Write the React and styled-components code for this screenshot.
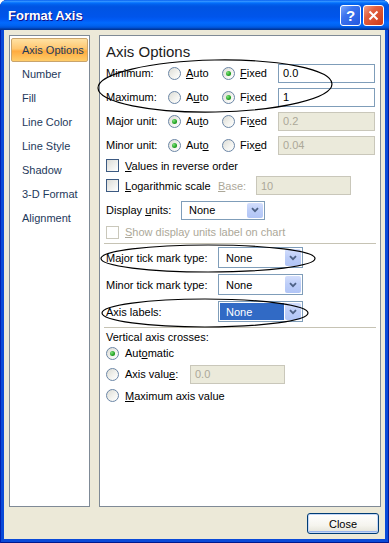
import React from "react";
import styled, { createGlobalStyle } from "styled-components";

const GlobalStyle = createGlobalStyle`
  html, body {
    margin: 0;
    padding: 0;
    background: #ffffff;
  }
  body {
    font-family: "Liberation Sans", Arial, sans-serif;
    font-size: 11px;
    color: #000;
  }
`;

const Window = styled.div`
  position: relative;
  width: 389px;
  height: 543px;
  display: flex;
  flex-direction: column;
  background: #0a4ad8;
  border-radius: 7px 7px 0 0;
  overflow: hidden;
  box-shadow: inset 1px 0 #0020b0, inset -1px 0 #001c9c, inset 0 -1px #00188c;
`;

const TitleBar = styled.div`
  height: 30px;
  flex-shrink: 0;
  display: flex;
  align-items: center;
  padding: 0 5px 0 8px;
  box-sizing: border-box;
  background: linear-gradient(
    to bottom,
    #0058ee 0%,
    #3593ff 4%,
    #288eff 6%,
    #127dff 8%,
    #036ffc 10%,
    #0262ee 14%,
    #0057e5 20%,
    #0054e3 24%,
    #0055eb 56%,
    #005bf5 66%,
    #026afe 76%,
    #0062ef 86%,
    #0052d6 92%,
    #0040ab 96%,
    #003092 100%
  );
`;

const Title = styled.div`
  flex: 1;
  color: #ffffff;
  font-weight: bold;
  font-size: 13px;
  text-shadow: 1px 1px #0f1089;
`;

const CaptionButton = styled.div`
  width: 21px;
  height: 21px;
  box-sizing: border-box;
  margin-left: 2px;
  border: 1px solid #ffffff;
  border-radius: 3px;
  display: flex;
  align-items: center;
  justify-content: center;
  color: #ffffff;
  font-weight: bold;
  font-size: 15px;
  background: ${(p) =>
    p.$variant === "close"
      ? "linear-gradient(135deg, #f0a08a 0%, #e2603f 35%, #cc3a18 100%)"
      : "linear-gradient(135deg, #7fa8fa 0%, #3d74ee 35%, #2256e0 100%)"};
`;

const Body = styled.div`
  flex: 1;
  margin: 0 4px 4px;
  padding: 5px 4px 5px 5px;
  display: flex;
  flex-direction: column;
  background: #ece9d8;
`;

const Main = styled.div`
  height: 472px;
  display: flex;
  gap: 9px;
`;

const NavList = styled.div`
  width: 81px;
  box-sizing: border-box;
  padding: 2px 1px;
  border: 1px solid #7f8a96;
  background: #ffffff;
  display: flex;
  flex-direction: column;
`;

const NavItem = styled.div`
  height: 24px;
  box-sizing: border-box;
  padding-left: 10px;
  display: flex;
  align-items: center;
  color: #1e395b;
  border: 1px solid ${(p) => (p.$active ? "#c9a46c" : "transparent")};
  border-radius: 2px;
  background: ${(p) =>
    p.$active
      ? "linear-gradient(#ffe2a4 0%, #ffc66e 45%, #ffab3f 55%, #ffcd6a 100%)"
      : "transparent"};
`;

const Panel = styled.div`
  flex: 1;
  box-sizing: border-box;
  padding: 7px 0 0 6px;
  border: 1px solid #7f8a96;
  background: #ffffff;
  display: flex;
  flex-direction: column;
`;

const Heading = styled.div`
  height: 18px;
  line-height: 18px;
  font-size: 15px;
  color: #1b1b1b;
`;

const Row = styled.div`
  height: ${(p) => p.$h}px;
  display: flex;
  align-items: center;
  flex-shrink: 0;
  color: ${(p) => (p.$disabled ? "#aca899" : "#000")};
`;

const Label = styled.div`
  width: ${(p) => p.$w}px;
  flex-shrink: 0;
  color: ${(p) => (p.$disabled ? "#aca899" : "inherit")};
`;

const U = styled.span`
  text-decoration: underline;
`;

const Option = styled.div`
  width: ${(p) => (p.$w ? `${p.$w}px` : "auto")};
  flex-shrink: 0;
  display: flex;
  align-items: center;
  gap: ${(p) => p.$gap || 5}px;
  color: ${(p) => (p.$disabled ? "#aca899" : "inherit")};
`;

const RadioCircle = styled.div`
  width: 13px;
  height: 13px;
  box-sizing: border-box;
  border-radius: 50%;
  border: 1px solid #6b86a6;
  background: linear-gradient(135deg, #dcdcd5 0%, #f4f4f0 60%, #ffffff 100%);
  display: flex;
  align-items: center;
  justify-content: center;
  flex-shrink: 0;

  &::after {
    content: "";
    display: ${(p) => (p.$checked ? "block" : "none")};
    width: 5px;
    height: 5px;
    border-radius: 50%;
    background: radial-gradient(circle at 35% 35%, #7fe27c 0%, #21a121 60%, #17801a 100%);
  }
`;

const CheckBox = styled.div`
  width: 13px;
  height: 13px;
  box-sizing: border-box;
  flex-shrink: 0;
  border: 1px solid ${(p) => (p.$disabled ? "#cac8bb" : "#3c5a82")};
  background: ${(p) =>
    p.$disabled ? "#ffffff" : "linear-gradient(135deg, #dcdcd7 0%, #ffffff 100%)"};
`;

const TextBox = styled.div`
  width: ${(p) => p.$w}px;
  height: 19px;
  box-sizing: border-box;
  flex-shrink: 0;
  padding-left: 4px;
  display: flex;
  align-items: center;
  border: 1px solid ${(p) => (p.$disabled ? "#c9c7ba" : "#7f9db9")};
  background: ${(p) => (p.$disabled ? "#ebeadb" : "#ffffff")};
  color: ${(p) => (p.$disabled ? "#aca899" : "#000")};
`;

const Select = styled.div`
  width: ${(p) => p.$w}px;
  height: ${(p) => p.$h}px;
  box-sizing: border-box;
  flex-shrink: 0;
  display: flex;
  border: 1px solid #7f9db9;
  background: #ffffff;
`;

const SelectValue = styled.div`
  flex: 1;
  margin: 1px 0 1px 1px;
  padding-left: 6px;
  display: flex;
  align-items: center;
  background: ${(p) => (p.$selected ? "#316ac5" : "transparent")};
  color: ${(p) => (p.$selected ? "#ffffff" : "#000")};
`;

const SelectButton = styled.div`
  width: 16px;
  margin: 1px;
  border-radius: 2px;
  display: flex;
  align-items: center;
  justify-content: center;
  background: linear-gradient(#d3defc 0%, #bccdf8 50%, #b1c5f6 100%);
`;

const Separator = styled.div`
  height: 1px;
  margin: ${(p) => p.$m || "0"};
  margin-left: -2px;
  margin-right: 4px;
  background: #c6c3b4;
  flex-shrink: 0;
`;

const Footer = styled.div`
  display: flex;
  justify-content: flex-end;
  padding: 6px 2px 0 0;
`;

const Button = styled.div`
  width: 72px;
  height: 21px;
  box-sizing: border-box;
  display: flex;
  align-items: center;
  justify-content: center;
  border: 1px solid #003c74;
  border-radius: 3px;
  background: linear-gradient(#ffffff 0%, #f5f4ee 60%, #e3e1d6 100%);
  box-shadow: inset 0 0 0 1px #c4d7f7, inset 0 -2px #98b4ee;
`;

const Annotations = styled.svg`
  position: absolute;
  top: 0;
  left: 0;
  pointer-events: none;
`;

function Chevron() {
  return (
    <svg width="8" height="6" viewBox="0 0 8 6">
      <path d="M1 1.2 L4 4.2 L7 1.2" fill="none" stroke="#4d6185" strokeWidth="1.8" />
    </svg>
  );
}

function Combo({ w, h, value, selected }) {
  return (
    <Select $w={w} $h={h}>
      <SelectValue $selected={selected}>{value}</SelectValue>
      <SelectButton>
        <Chevron />
      </SelectButton>
    </Select>
  );
}

function AxisRow({ label, auto, fixed, checkedFixed, value, disabled }) {
  return (
    <Row $h={24}>
      <Label $w={62}>{label}</Label>
      <Option $w={54}>
        <RadioCircle $checked={!checkedFixed} />
        <span>{auto}</span>
      </Option>
      <Option $w={56}>
        <RadioCircle $checked={checkedFixed} />
        <span>{fixed}</span>
      </Option>
      <TextBox $w={97} $disabled={disabled}>
        {value}
      </TextBox>
    </Row>
  );
}

const navItems = [
  "Axis Options",
  "Number",
  "Fill",
  "Line Color",
  "Line Style",
  "Shadow",
  "3-D Format",
  "Alignment",
];

export default function App() {
  return (
    <>
      <GlobalStyle />
      <Window>
        <TitleBar>
          <Title>Format Axis</Title>
          <CaptionButton $variant="help">?</CaptionButton>
          <CaptionButton $variant="close">
            <svg width="11" height="11" viewBox="0 0 11 11">
              <path d="M1.5 1.5 L9.5 9.5 M9.5 1.5 L1.5 9.5" stroke="#ffffff" strokeWidth="2" />
            </svg>
          </CaptionButton>
        </TitleBar>
        <Body>
          <Main>
            <NavList>
              {navItems.map((item, i) => (
                <NavItem key={item} $active={i === 0}>
                  {item}
                </NavItem>
              ))}
            </NavList>
            <Panel>
              <Heading>Axis Options</Heading>
              <AxisRow
                label="Minimum:"
                auto={<><U>A</U>uto</>}
                fixed={<><U>F</U>ixed</>}
                checkedFixed
                value="0.0"
              />
              <AxisRow
                label="Maximum:"
                auto={<>A<U>u</U>to</>}
                fixed={<>F<U>i</U>xed</>}
                checkedFixed
                value="1"
              />
              <AxisRow
                label="Major unit:"
                auto={<>Au<U>t</U>o</>}
                fixed={<>Fi<U>x</U>ed</>}
                value="0.2"
                disabled
              />
              <AxisRow
                label="Minor unit:"
                auto={<>Aut<U>o</U></>}
                fixed={<>Fix<U>e</U>d</>}
                value="0.04"
                disabled
              />
              <Row $h={17}>
                <Option $gap={6}>
                  <CheckBox />
                  <span>
                    <U>V</U>alues in reverse order
                  </span>
                </Option>
              </Row>
              <Row $h={23}>
                <Option $w={112} $gap={6}>
                  <CheckBox />
                  <span>
                    <U>L</U>ogarithmic scale
                  </span>
                </Option>
                <Label $w={38} $disabled>
                  <U>B</U>ase:
                </Label>
                <TextBox $w={95} $disabled>
                  10
                </TextBox>
              </Row>
              <Row $h={26}>
                <Label $w={75}>
                  Display <U>u</U>nits:
                </Label>
                <Combo w={84} h={19} value="None" />
              </Row>
              <Row $h={18}>
                <Option $gap={6} $disabled>
                  <CheckBox $disabled />
                  <span>
                    <U>S</U>how display units label on chart
                  </span>
                </Option>
              </Row>
              <Separator $m="2px 0 0" />
              <Row $h={27}>
                <Label $w={112}>
                  Ma<U>j</U>or tick mark type:
                </Label>
                <Combo w={85} h={21} value="None" />
              </Row>
              <Row $h={27}>
                <Label $w={112}>Minor tick mark type:</Label>
                <Combo w={85} h={21} value="None" />
              </Row>
              <Row $h={27}>
                <Label $w={112}>Axis labels:</Label>
                <Combo w={85} h={21} value="None" selected />
              </Row>
              <Separator $m="2px 0 0" />
              <Row $h={17}>Vertical axis crosses:</Row>
              <Row $h={16}>
                <Option $gap={6}>
                  <RadioCircle $checked />
                  <span>
                    Aut<U>o</U>matic
                  </span>
                </Option>
              </Row>
              <Row $h={26}>
                <Option $w={84} $gap={6}>
                  <RadioCircle />
                  <span>
                    Axis valu<U>e</U>:
                  </span>
                </Option>
                <TextBox $w={95} $disabled>
                  0.0
                </TextBox>
              </Row>
              <Row $h={17}>
                <Option $gap={6}>
                  <RadioCircle />
                  <span>
                    <U>M</U>aximum axis value
                  </span>
                </Option>
              </Row>
            </Panel>
          </Main>
          <Footer>
            <Button>Close</Button>
          </Footer>
        </Body>
        <Annotations width="389" height="543" viewBox="0 0 389 543">
          <g fill="none" stroke="#000" strokeWidth="1.2">
            <ellipse cx="215" cy="86" rx="117" ry="26" transform="rotate(-1 215 86)" />
            <ellipse cx="208" cy="258.5" rx="107" ry="13.5" />
            <ellipse cx="205" cy="313" rx="103" ry="14" />
          </g>
        </Annotations>
      </Window>
    </>
  );
}
